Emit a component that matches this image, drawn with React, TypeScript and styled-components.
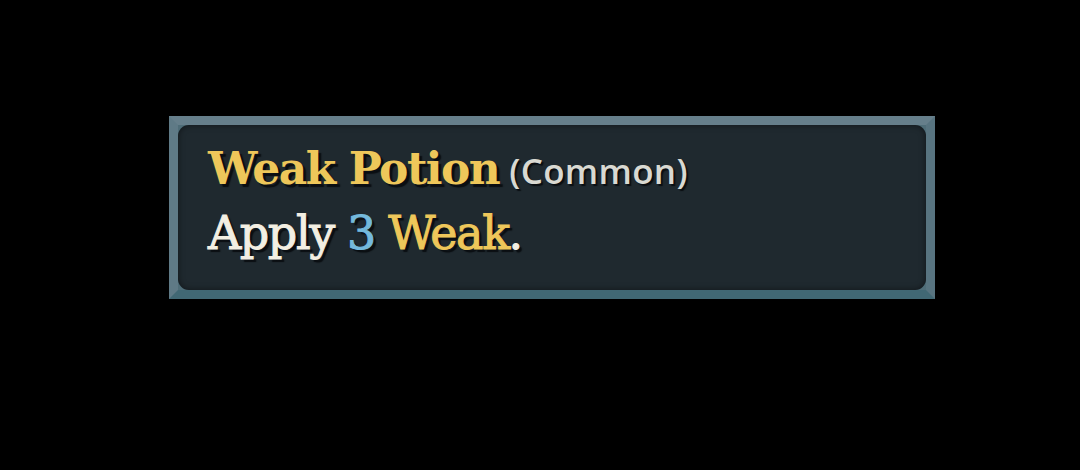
import React from "react";
import styled, { createGlobalStyle } from "styled-components";

const Global = createGlobalStyle`
  html, body { margin: 0; padding: 0; background: #000; }
  body { width: 1080px; height: 470px; overflow: hidden; }
`;

const Page = styled.div`
  width: 1080px;
  height: 470px;
  box-sizing: border-box;
  padding: 116px 0 0 169px;
  background: #000;
`;

const Frame = styled.div`
  width: 766px;
  height: 183px;
  box-sizing: border-box;
  border-style: solid;
  border-width: 9px;
  border-color: #667f8b #587480 #416874 #5f7a86;
  background: #4f6d78;
`;

const Panel = styled.div`
  height: 100%;
  box-sizing: border-box;
  background: #1f292f;
  border-radius: 11px;
  box-shadow: inset 0 0 6px rgba(0, 0, 0, 0.5);
  padding: 18px 30px 0 30px;
  display: flex;
  flex-direction: column;
`;

const TitleRow = styled.div`
  display: flex;
  align-items: baseline;
  gap: 10px;
  height: 60px;
`;

const Title = styled.span`
  font-family: "DejaVu Serif", serif;
  font-weight: bold;
  font-size: 44px;
  letter-spacing: -1.5px;
  color: #eec75a;
  text-shadow: 3px 3px 1px #0a0e12;
`;

const Rarity = styled.span`
  font-family: "Open Sans", sans-serif;
  font-weight: 600;
  font-size: 35px;
  letter-spacing: 0.3px;
  color: #d9d9d2;
  text-shadow: 2px 2px 1px #0a0e12;
`;

const Desc = styled.div`
  font-family: "DejaVu Serif", serif;
  font-size: 46px;
  letter-spacing: -1.4px;
  color: #f3efe3;
  -webkit-text-stroke: 1px currentColor;
  text-shadow: 3px 3px 1px #0a0e12;
  line-height: 60px;
`;

const Hl = styled.span<{ $tone: "blue" | "gold" }>`
  color: ${(p) => (p.$tone === "blue" ? "#74b9dc" : "#eec75a")};
`;

export default function App() {
  return (
    <>
      <Global />
      <Page>
        <Frame>
          <Panel>
            <TitleRow>
              <Title>Weak Potion</Title>
              <Rarity>(Common)</Rarity>
            </TitleRow>
            <Desc>
              Apply <Hl $tone="blue">3</Hl> <Hl $tone="gold">Weak</Hl>.
            </Desc>
          </Panel>
        </Frame>
      </Page>
    </>
  );
}
